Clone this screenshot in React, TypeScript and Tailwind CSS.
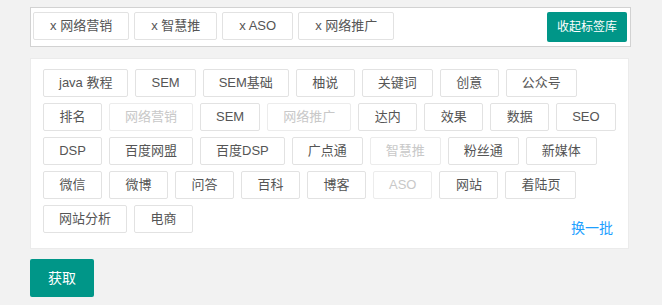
import React from "react";

type Tag = { t: string; off?: boolean };

const selected = ["网络营销", "智慧推", "ASO", "网络推广"];

const tags: Tag[] = [
  { t: "java 教程" },
  { t: "SEM" },
  { t: "SEM基础" },
  { t: "柚说" },
  { t: "关键词" },
  { t: "创意" },
  { t: "公众号" },
  { t: "排名" },
  { t: "网络营销", off: true },
  { t: "SEM" },
  { t: "网络推广", off: true },
  { t: "达内" },
  { t: "效果" },
  { t: "数据" },
  { t: "SEO" },
  { t: "DSP" },
  { t: "百度网盟" },
  { t: "百度DSP" },
  { t: "广点通" },
  { t: "智慧推", off: true },
  { t: "粉丝通" },
  { t: "新媒体" },
  { t: "微信" },
  { t: "微博" },
  { t: "问答" },
  { t: "百科" },
  { t: "博客" },
  { t: "ASO", off: true },
  { t: "网站" },
  { t: "着陆页" },
  { t: "网站分析" },
  { t: "电商" },
];

export default function App() {
  return (
    <div
      className="min-h-[305px] w-[662px] bg-[#f2f2f2] pl-[30px] pt-[7px]"
      style={{ fontFamily: '"Liberation Sans", "Noto Sans CJK SC", sans-serif' }}
    >
      <div className="flex w-[601px] items-start justify-between border border-[#d2d2d2] bg-white pb-[4px] pl-[2px] pr-[3px] pt-[4px]">
        <div className="flex gap-[5px]">
          {selected.map((s) => (
            <div
              key={s}
              className="h-[28px] whitespace-nowrap rounded-[2px] border border-[#e2e2e2] bg-white px-[16px] text-[13px] leading-[26px] text-[#555]"
            >
              x {s}
            </div>
          ))}
        </div>
        <button className="h-[30px] rounded-[2px] bg-[#009688] px-[10px] text-[12px] leading-[30px] text-white">
          收起标签库
        </button>
      </div>

      <div className="mt-[11px] w-[599px] border border-[#ebebeb] bg-white pb-[10px] pl-[12px] pr-[8px] pt-[10px]">
        <div className="flex flex-wrap gap-x-[7px] gap-y-[6px]">
          {tags.map((g, i) => (
            <div
              key={i}
              className={
                "h-[28px] min-w-[59px] whitespace-nowrap rounded-[2px] border bg-white px-[15px] text-center text-[13px] leading-[26px] " +
                (g.off
                  ? "border-[#ececec] text-[#c8c8c8]"
                  : "border-[#e2e2e2] text-[#555]")
              }
            >
              {g.t}
            </div>
          ))}
        </div>
        <div className="-mt-[15px] flex justify-end pr-[7px]">
          <span className="text-[14px] leading-[20px] text-[#1e9fff]">换一批</span>
        </div>
      </div>

      <button className="mt-[10px] h-[38px] rounded-[2px] bg-[#009688] px-[18px] text-[14px] leading-[38px] text-white">
        获取
      </button>
    </div>
  );
}
